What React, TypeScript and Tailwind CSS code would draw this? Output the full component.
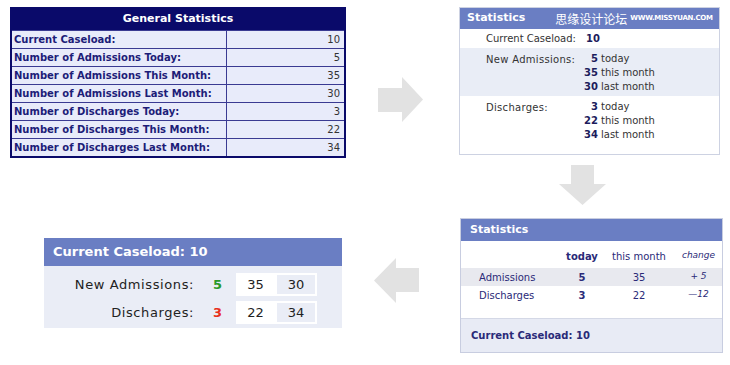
import React from 'react'

const generalRows: [string, number][] = [
  ['Current Caseload:', 10],
  ['Number of Admissions Today:', 5],
  ['Number of Admissions This Month:', 35],
  ['Number of Admissions Last Month:', 30],
  ['Number of Discharges Today:', 3],
  ['Number of Discharges This Month:', 22],
  ['Number of Discharges Last Month:', 34],
]

function ArrowRight() {
  return (
    <svg width="45" height="45" viewBox="0 0 45 45">
      <polygon points="0,11 24,11 24,0 45,22.5 24,45 24,35 0,35" fill="#e2e2e2" />
    </svg>
  )
}

function ArrowLeft() {
  return (
    <svg width="45" height="45" viewBox="0 0 45 45">
      <polygon points="45,10 22,10 22,0 0,22.5 22,45 22,34 45,34" fill="#e2e2e2" />
    </svg>
  )
}

function ArrowDown() {
  return (
    <svg width="47" height="40" viewBox="0 0 47 40">
      <polygon points="12,0 35,0 35,19 47,19 23.5,40 0,19 12,19" fill="#e2e2e2" />
    </svg>
  )
}

function GeneralTable() {
  return (
    <div className="w-[336px] border-2 border-[#0a0a6a] bg-[#e8ebfa]">
      <div className="flex h-[21px] items-center justify-center bg-[#0a0a6a] text-[11px] font-bold text-white">
        General Statistics
      </div>
      {generalRows.map(([label, value]) => (
        <div key={label} className="flex h-[18px] border-t border-[#3a3a92] text-[10px] font-bold text-[#1d1d78]">
          <div className="flex w-[215px] items-center border-r border-[#3a3a92] pl-[2px]">{label}</div>
          <div className="flex flex-1 items-center justify-end pr-[4px] font-normal text-[#333]">{value}</div>
        </div>
      ))}
    </div>
  )
}

function StackedPanel() {
  const groups = [
    { label: 'New Admissions:', bg: 'bg-[#e9edf6]', vals: [['5', 'today'], ['35', 'this month'], ['30', 'last month']] },
    { label: 'Discharges:', bg: 'bg-white', vals: [['3', 'today'], ['22', 'this month'], ['34', 'last month']] },
  ]
  return (
    <div className="w-[261px] border border-[#cdd2e2] bg-white">
      <div className="flex h-[21px] items-center whitespace-nowrap bg-[#6a7ec3] pl-[7px]">
        <span className="text-[11px] font-bold text-white">Statistics</span>
        <span className="ml-[30px] text-[12px] leading-none text-white" style={{ fontFamily: '"Noto Sans CJK SC", sans-serif' }}>
          思缘设计论坛
        </span>
        <span className="ml-[3px] text-[7px] font-bold tracking-[-0.3px] text-white">WWW.MISSYUAN.COM</span>
      </div>
      <div className="flex h-[19px] items-center pl-[26px] text-[10px] text-[#333]">
        <span className="w-[100px]">Current Caseload:</span>
        <span className="font-bold text-[#1c1c5c]">10</span>
      </div>
      {groups.map((g) => (
        <div key={g.label} className={`flex py-[3px] pl-[26px] text-[10px] text-[#333] ${g.bg}`}>
          <span className="w-[94px] pt-[1px] tracking-[0.3px]">{g.label}</span>
          <div className="flex flex-col">
            {g.vals.map(([n, t]) => (
              <div key={t} className="flex h-[14px] items-center">
                <span className="w-[18px] text-right font-bold text-[#1c1c5c]">{n}</span>
                <span className="ml-[3px]">{t}</span>
              </div>
            ))}
          </div>
        </div>
      ))}
      <div className="h-[10px]" />
    </div>
  )
}

function GridPanel() {
  return (
    <div className="w-[263px] border border-[#c8cde0] bg-white text-[#2a2a78]">
      <div className="flex h-[22px] items-center bg-[#6a7ec3] pl-[9px] text-[11px] font-bold text-white">Statistics</div>
      <div className="flex h-[27px] items-center pt-[3px] text-[10px]">
        <span className="w-[101px]" />
        <span className="w-[40px] text-center font-bold">today</span>
        <span className="w-[74px] text-center">this month</span>
        <span className="w-[45px] text-center text-[9px] italic">change</span>
      </div>
      <div className="flex h-[18px] items-center bg-[#e8e9ef] text-[10px]">
        <span className="w-[101px] pl-[18px]">Admissions</span>
        <span className="w-[40px] text-center font-bold">5</span>
        <span className="w-[74px] text-center">35</span>
        <span className="w-[45px] text-center text-[9px] italic">+ 5</span>
      </div>
      <div className="flex h-[18px] items-center text-[10px]">
        <span className="w-[101px] pl-[18px]">Discharges</span>
        <span className="w-[40px] text-center font-bold">3</span>
        <span className="w-[74px] text-center">22</span>
        <span className="w-[45px] text-center text-[9px] italic">—12</span>
      </div>
      <div className="h-[14px]" />
      <div className="flex h-[34px] items-center border-t border-[#d4d8e6] bg-[#e8ebf5] pl-[10px] text-[10px] font-bold">
        Current Caseload: 10
      </div>
    </div>
  )
}

function CompactPanel() {
  const rows = [
    { label: 'New Admissions:', today: '5', color: 'text-[#2a9a2a]', month: '35', last: '30' },
    { label: 'Discharges:', today: '3', color: 'text-[#e8301c]', month: '22', last: '34' },
  ]
  return (
    <div className="w-[298px] bg-[#eaedf6]">
      <div className="flex h-[28px] items-center bg-[#6a7ec3] pl-[9px] text-[13px] font-bold text-white">
        Current Caseload: 10
      </div>
      <div className="flex flex-col gap-[5px] pt-[7px] pb-[4px]">
        {rows.map((r) => (
          <div key={r.label} className="flex h-[23px] items-center text-[13px] text-[#222]">
            <span className="w-[150px] text-right tracking-[0.6px]">{r.label}</span>
            <span className={`w-[42px] pl-[19px] font-bold ${r.color}`}>{r.today}</span>
            <span className="flex h-[23px] w-[39px] items-center justify-center bg-white">{r.month}</span>
            <span className="flex h-[23px] w-[42px] items-center justify-center border-2 border-white bg-[#eaedf6]">{r.last}</span>
          </div>
        ))}
      </div>
    </div>
  )
}

export default function App() {
  return (
    <div
      className="h-[365px] w-[730px] overflow-hidden bg-white"
      style={{ fontFamily: '"DejaVu Sans", Verdana, sans-serif' }}
    >
      <div className="flex items-start pt-[7px] pl-[10px]">
        <GeneralTable />
        <div className="ml-[32px] mt-[70px]">
          <ArrowRight />
        </div>
        <div className="ml-[36px]">
          <StackedPanel />
        </div>
      </div>
      <div className="mt-[7px] ml-[559px]">
        <ArrowDown />
      </div>
      <div className="mt-[13px] flex items-start">
        <div className="ml-[44px] mt-[20px]">
          <CompactPanel />
        </div>
        <div className="ml-[32px] mt-[40px]">
          <ArrowLeft />
        </div>
        <div className="ml-[41px]">
          <GridPanel />
        </div>
      </div>
    </div>
  )
}
